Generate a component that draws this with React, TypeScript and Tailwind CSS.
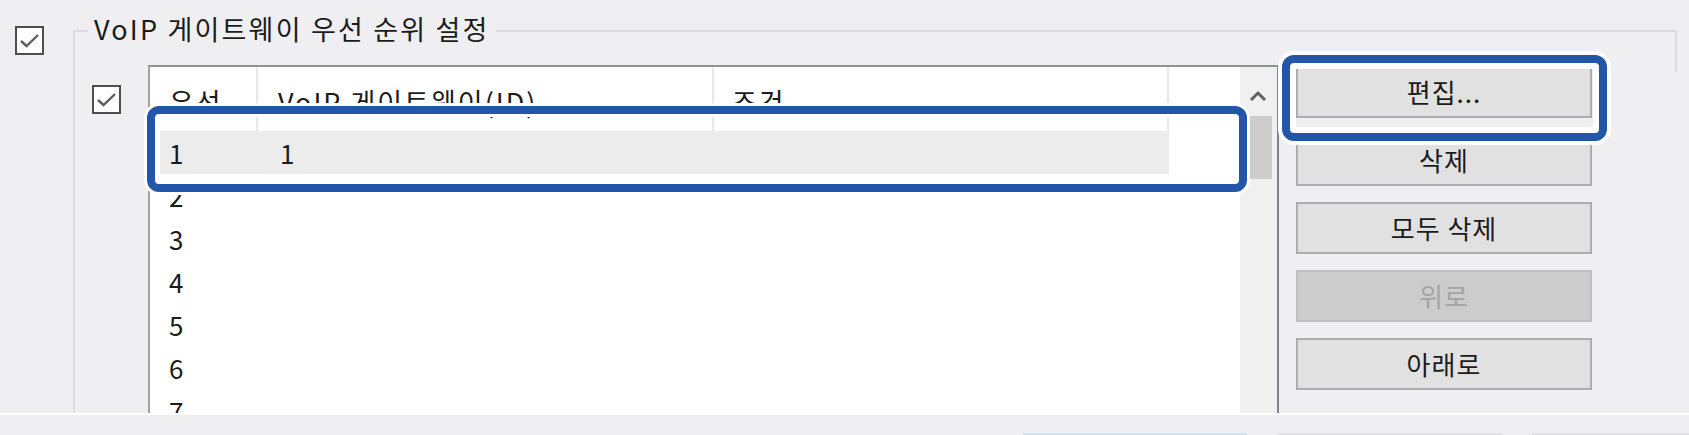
import React from "react";

function CheckBox({ className = "" }: { className?: string }) {
  return (
    <div className={`w-[29px] h-[29px] border-2 border-[#4d4d4d] bg-white flex items-center justify-center ${className}`}>
      <svg width="21" height="16" viewBox="0 0 21 16" fill="none">
        <polyline points="2,8 7.5,13 19,2" stroke="#5f5f5f" strokeWidth="2.4" strokeLinejoin="miter" />
      </svg>
    </div>
  );
}

const buttons = [
  { label: "편집...", disabled: false },
  { label: "삭제", disabled: false },
  { label: "모두 삭제", disabled: false },
  { label: "위로", disabled: true },
  { label: "아래로", disabled: false },
];

const rows = ["1", "2", "3", "4", "5", "6", "7"];

export default function App() {
  return (
    <div className="relative w-[1689px] h-[435px] overflow-hidden bg-[#efeff1] text-[#1b1b1b] font-['Noto_Sans_CJK_KR','Noto_Sans',sans-serif] text-[26px] leading-none">
      <div className="h-[413px] flex overflow-hidden">
        {/* outer checkbox */}
        <div className="w-[73px] shrink-0 pl-[15px] pt-[26px]">
          <CheckBox />
        </div>

        {/* group box */}
        <div className="mt-[30px] w-[1604px] shrink-0 flex border-t-2 border-l-2 border-[#dcdcdc]">
          <div className="flex flex-col">
            {/* title */}
            <div className="-mt-[17px] h-[34px] flex items-center">
              <span className="ml-[13px] px-[6px] bg-[#efeff1] whitespace-nowrap text-[27px] tracking-[2.2px]">VoIP 게이트웨이 우선 순위 설정</span>
            </div>

            <div className="flex items-start">
              <CheckBox className="ml-[17px] mt-[43px] shrink-0" />

              {/* list */}
              <div className="ml-[27px] mt-[23px] w-[1131px] h-[360px] shrink-0 flex bg-white border-t-2 border-l-2 border-r-2 border-t-[#8e9297] border-l-[#a3a3a3] border-r-[#7b8690]">
                <div className="flex-1 pl-[10px] flex flex-col">
                  <div className="h-[64px] flex shrink-0 text-[27px] tracking-[2px]">
                    <div className="w-[98px] border-r-2 border-[#e8e8e8] flex items-center pl-[9px] pt-[4px]">우선</div>
                    <div className="w-[456px] border-r-2 border-[#e8e8e8] flex items-center pl-[20px] pt-[4px]">VoIP 게이트웨이(ID)</div>
                    <div className="w-[455px] border-r-2 border-[#e8e8e8] flex items-center pl-[18px] pt-[4px]">조건</div>
                  </div>
                  {rows.map((r, i) => (
                    <div key={r} className={`h-[43px] w-[1009px] flex items-center shrink-0 ${i === 0 ? "bg-[#ececec]" : ""}`}>
                      <div className="w-[98px] pl-[9px]">{r}</div>
                      {i === 0 && <div className="pl-[22px]">1</div>}
                    </div>
                  ))}
                </div>
                {/* scrollbar */}
                <div className="w-[37px] bg-[#f0f0f0] flex flex-col">
                  <div className="h-[49px] flex items-center justify-center pr-[2px] pt-[8px]">
                    <svg width="18" height="12" viewBox="0 0 18 12" fill="none">
                      <polyline points="2,10 9,3 16,10" stroke="#606060" strokeWidth="3" />
                    </svg>
                  </div>
                  <div className="ml-[10px] w-[22px] h-[63px] bg-[#cdcdcd]" />
                </div>
              </div>

              {/* buttons */}
              <div className="ml-[17px] mt-[24px] w-[296px] shrink-0 flex flex-col gap-[16px] tracking-[1px]">
                {buttons.map((b) => (
                  <div
                    key={b.label}
                    className={`h-[52px] border-2 flex items-center justify-center ${
                      b.disabled ? "bg-[#cccccc] border-[#c0c0c0] text-[#a4a4a4]" : "bg-[#e1e1e1] border-[#adadad]"
                    }`}
                  >
                    {b.label}
                  </div>
                ))}
              </div>
            </div>
          </div>
          <div className="w-[85px] h-[40px] border-r-2 border-[#dcdcdc] shrink-0" />
        </div>
      </div>

      {/* bottom strip */}
      <div className="h-[22px] border-t-2 border-white flex flex-col">
        <div className="mt-auto h-[2px] flex">
          <div className="w-[1023px]" />
          <div className="w-[224px] bg-[#d3e1ee]" />
          <div className="w-[30px]" />
          <div className="w-[225px] bg-[#e2e2e4]" />
          <div className="w-[30px]" />
          <div className="flex-1 bg-[#e2e2e4]" />
        </div>
      </div>

      {/* annotation rings */}
      <div className="absolute left-[147px] top-[106px] w-[1100px] h-[86px] border-[8px] border-[#2356a8] rounded-[12px] shadow-[0_0_0_3px_white,inset_0_0_0_3px_white]" />
      <div className="absolute left-[1282px] top-[55px] w-[325px] h-[86px] border-[8px] border-[#2356a8] rounded-[12px] shadow-[0_0_0_4px_white,inset_0_0_0_6px_white]" />
    </div>
  );
}
